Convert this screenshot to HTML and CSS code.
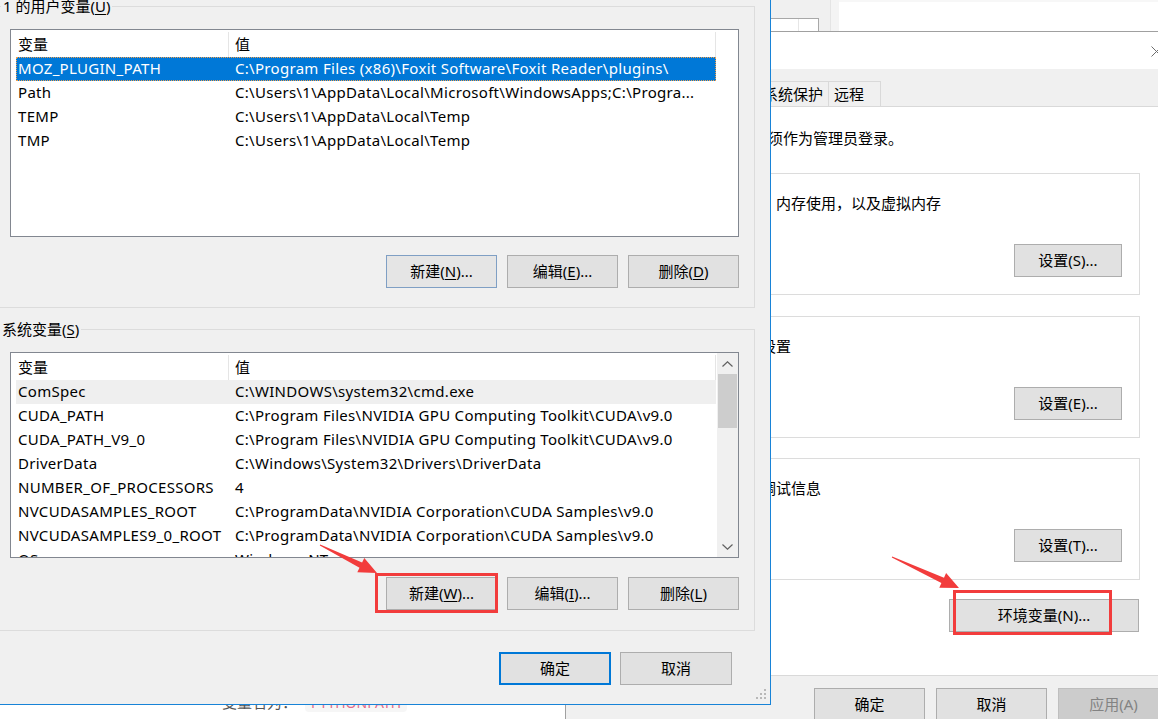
FILE: index.html
```html
<!DOCTYPE html>
<html lang="zh-CN">
<head>
<meta charset="utf-8">
<title>环境变量</title>
<link rel="stylesheet" href="styles.css">
</head>
<body>
<div class="desktop">

  <div class="bgwin">
    <div class="bg-gap"></div>
    <div class="bg-panel"><div class="bg-field"><span class="bg-field-a"></span></div></div>
    <div class="bg-strip"></div>
    <div class="bg-rest"></div>
  </div>

  <div class="webtext">变量名为：<span class="code">PYTHONPATH</span></div>

  <div class="sysprops">
    <div class="sp-title">
      <svg class="sp-close" width="11" height="11" viewBox="0 0 11 11"><path d="M0.5 0.5L10.5 10.5M10.5 0.5L0.5 10.5" stroke="#6d6d6d" stroke-width="1" fill="none"/></svg>
    </div>
    <div class="sp-tabs">
      <div class="tab tab-a">计算机名</div>
      <div class="tab tab-b">硬件</div>
      <div class="tab tab-c">高级</div>
      <div class="tab tab-d">系统保护</div>
      <div class="tab tab-e">远程</div>
    </div>
    <div class="sp-page">
      <p class="sp-note">要进行大多数更改，你必须作为管理员登录。</p>
      <fieldset class="sp-group">
        <legend>性能</legend>
        <p class="sp-text">视觉效果，处理器计划，内存使用，以及虚拟内存</p>
        <div class="sp-btnrow"><button class="btn sp-btn">设置(S)...</button></div>
      </fieldset>
      <fieldset class="sp-group">
        <legend>用户配置文件</legend>
        <p class="sp-text">与登录帐户相关的桌面设置</p>
        <div class="sp-btnrow"><button class="btn sp-btn">设置(E)...</button></div>
      </fieldset>
      <fieldset class="sp-group sp-group-last">
        <legend>启动和故障恢复</legend>
        <p class="sp-text">系统启动、系统故障和调试信息</p>
        <div class="sp-btnrow"><button class="btn sp-btn">设置(T)...</button></div>
      </fieldset>
      <div class="sp-envrow"><button class="btn env-btn">环境变量(N)...</button></div>
    </div>
    <div class="sp-foot">
      <button class="btn foot-btn">确定</button>
      <button class="btn foot-btn">取消</button>
      <button class="btn foot-btn disabled">应用(A)</button>
    </div>
  </div>

  <div class="envdlg">
    <fieldset class="group g-user">
      <legend class="lg-user">1 的用户变量(<u>U</u>)</legend>
      <div class="lv lv-user">
        <div class="lv-body">
          <div class="lv-head"><div class="c1">变量</div><div class="c2">值</div></div>
          <div class="lv-row sel"><div class="c1">MOZ_PLUGIN_PATH</div><div class="c2">C:\Program Files (x86)\Foxit Software\Foxit Reader\plugins\</div></div>
          <div class="lv-row"><div class="c1">Path</div><div class="c2">C:\Users\1\AppData\Local\Microsoft\WindowsApps;C:\Progra...</div></div>
          <div class="lv-row"><div class="c1">TEMP</div><div class="c2">C:\Users\1\AppData\Local\Temp</div></div>
          <div class="lv-row"><div class="c1">TMP</div><div class="c2">C:\Users\1\AppData\Local\Temp</div></div>
        </div>
      </div>
      <div class="btnrow">
        <button class="btn row-btn focus">新建(<u>N</u>)...</button>
        <button class="btn row-btn">编辑(<u>E</u>)...</button>
        <button class="btn row-btn">删除(<u>D</u>)</button>
      </div>
    </fieldset>

    <fieldset class="group g-sys">
      <legend class="lg-sys">系统变量(<u>S</u>)</legend>
      <div class="lv lv-sys">
        <div class="lv-body">
          <div class="lv-head"><div class="c1">变量</div><div class="c2">值</div></div>
          <div class="lv-row hover"><div class="c1">ComSpec</div><div class="c2">C:\WINDOWS\system32\cmd.exe</div></div>
          <div class="lv-row"><div class="c1">CUDA_PATH</div><div class="c2">C:\Program Files\NVIDIA GPU Computing Toolkit\CUDA\v9.0</div></div>
          <div class="lv-row"><div class="c1">CUDA_PATH_V9_0</div><div class="c2">C:\Program Files\NVIDIA GPU Computing Toolkit\CUDA\v9.0</div></div>
          <div class="lv-row"><div class="c1">DriverData</div><div class="c2">C:\Windows\System32\Drivers\DriverData</div></div>
          <div class="lv-row"><div class="c1">NUMBER_OF_PROCESSORS</div><div class="c2">4</div></div>
          <div class="lv-row"><div class="c1">NVCUDASAMPLES_ROOT</div><div class="c2">C:\ProgramData\NVIDIA Corporation\CUDA Samples\v9.0</div></div>
          <div class="lv-row"><div class="c1">NVCUDASAMPLES9_0_ROOT</div><div class="c2">C:\ProgramData\NVIDIA Corporation\CUDA Samples\v9.0</div></div>
          <div class="lv-row"><div class="c1">OS</div><div class="c2">Windows_NT</div></div>
        </div>
        <div class="sb">
          <div class="sb-btn"><svg width="11" height="6" viewBox="0 0 11 6"><path d="M0.5 5.5L5.5 0.8L10.5 5.5" stroke="#606060" stroke-width="1.2" fill="none"/></svg></div>
          <div class="sb-thumb"></div>
          <div class="sb-fill"></div>
          <div class="sb-btn"><svg width="11" height="6" viewBox="0 0 11 6"><path d="M0.5 0.5L5.5 5.2L10.5 0.5" stroke="#606060" stroke-width="1.2" fill="none"/></svg></div>
        </div>
      </div>
      <div class="btnrow btnrow-sys">
        <button class="btn row-btn">新建(<u>W</u>)...</button>
        <button class="btn row-btn">编辑(<u>I</u>)...</button>
        <button class="btn row-btn">删除(<u>L</u>)</button>
      </div>
    </fieldset>

    <div class="dlg-foot">
      <button class="btn dlg-btn ok">确定</button>
      <button class="btn dlg-btn">取消</button>
    </div>

    <svg class="grip" width="11" height="11" viewBox="0 0 11 11">
      <rect x="8" y="0" width="2" height="2" fill="#b8b8b8"/>
      <rect x="4" y="4" width="2" height="2" fill="#b8b8b8"/>
      <rect x="8" y="4" width="2" height="2" fill="#b8b8b8"/>
      <rect x="0" y="8" width="2" height="2" fill="#b8b8b8"/>
      <rect x="4" y="8" width="2" height="2" fill="#b8b8b8"/>
      <rect x="8" y="8" width="2" height="2" fill="#b8b8b8"/>
    </svg>
  </div>

  <svg class="marks" width="1158" height="719" viewBox="0 0 1158 719">
    <rect x="376.5" y="574.5" width="120" height="37" fill="none" stroke="#f23c3c" stroke-width="3"/>
    <rect x="954.5" y="591.5" width="156" height="42" fill="none" stroke="#f23c3c" stroke-width="3"/>
    <polygon fill="#f23c3c" points="320.2,544.6 362.1,562.4 364.3,557.9 377,573 357.3,572.3 359.5,567.8 319.8,545.4"/>
    <polygon fill="#f23c3c" points="892.2,556.6 944,577.7 946.1,573.1 959,588 939.3,587.7 941.4,583.1 891.8,557.4"/>
  </svg>
</div>
</body>
</html>
```

FILE: styles.css
```css
* { box-sizing: border-box; }
html, body { margin: 0; padding: 0; }
body {
  width: 1158px;
  height: 719px;
  overflow: hidden;
  background: #ffffff;
  font-family: "Noto Sans", "Noto Sans CJK SC", sans-serif;
  font-size: 15px;
  color: #000;
}
.desktop { position: relative; width: 1158px; height: 719px; overflow: hidden; background: #fff; }

button { font: inherit; color: #000; }
u { text-decoration: underline; text-underline-offset: 2px; text-decoration-thickness: 1px; }

/* ---------- window behind, at top ---------- */
.bgwin {
  position: absolute; left: 0; top: 0;
  width: 1158px; height: 31px;
  display: flex; background: #fff;
}
.bg-gap { width: 771px; flex: none; }
.bg-panel { width: 59px; flex: none; background: #f0f0f0; }
.bg-field {
  margin-top: 18px; width: 48px; height: 13px;
  background: #fff; border-top: 1px solid #a8a8a8; border-right: 1px solid #a8a8a8;
  display: flex;
}
.bg-field-a { width: 28px; border-right: 1px solid #e6e6e6; }
.bg-strip { width: 9px; flex: none; background: #f4f4f4; border-left: 1px solid #e4e4e4; }
.bg-rest { flex: 1; border-top: 2px solid #f7f7f7; }

/* ---------- faint page text below dialog ---------- */
.webtext {
  position: absolute; left: 222px; top: 692px;
  line-height: 20px; font-size: 15px; color: #555;
}
.webtext .code {
  margin-left: 8px; padding: 0 6px; border-radius: 4px;
  background: #f6f6f6; color: #e36a8a; font-size: 14px;
}

/* ---------- System properties dialog ---------- */
.sysprops {
  position: absolute; left: 565px; top: 31px;
  width: 640px; height: 720px;
  border-left: 1px solid #a0a0a0; border-top: 1px solid #a0a0a0;
  background: #f0f0f0;
}
.sp-title {
  height: 37px; background: #fff;
  display: flex; align-items: center;
  padding-left: 585px;
}
.sp-close { display: block; margin-top: 2px; }
.sp-tabs {
  height: 38px; padding: 12px 0 0 6px;
  border-bottom: 1px solid #d9d9d9;
  display: flex; background: #f0f0f0;
}
.tab {
  height: 25px; line-height: 24px;
  border-top: 1px solid #d9d9d9; border-left: 1px solid #d9d9d9;
  padding-left: 5px; white-space: nowrap; background: #f0f0f0;
}
.tab-a { width: 75px; }
.tab-b { width: 50px; }
.tab-c { width: 60px; background: #fff; }
.tab-d { width: 71px; }
.tab-e { width: 53px; border-right: 1px solid #d9d9d9; }

.sp-page {
  height: 569px; background: #fff;
  border-bottom: 1px solid #d9d9d9;
  padding: 21px 0 0 37px;
}
.sp-note { margin: 0; line-height: 20px; white-space: nowrap; }
.sp-group {
  margin: 17px 0 0 -8px; width: 545px; min-width: 0;
  border: 1px solid #dcdcdc;
  padding: 0 17px 17px 15px;
}
.sp-group + .sp-group { margin-top: 13px; }
.sp-group.sp-group-last { margin-top: 12px; }
.sp-group legend {
  line-height: 16px; padding: 0 2px; margin-left: 6px; font-size: 15px;
}
.sp-text { margin: 12px 0 0 0; line-height: 20px; white-space: nowrap; }
.sp-btnrow { margin-top: 31px; display: flex; justify-content: flex-end; }

.btn {
  height: 33px; padding: 0;
  background: #e1e1e1; border: 1px solid #adadad;
  line-height: 31px; white-space: nowrap; text-align: center;
}
.sp-btn { width: 108px; }
.sp-envrow {
  margin: 19px 0 0 -8px; width: 545px; padding-right: 1px;
  display: flex; justify-content: flex-end;
}
.env-btn { width: 190px; }
.sp-foot { padding: 12px 0 0 248px; display: flex; gap: 11px; }
.foot-btn { width: 111px; }
.foot-btn.disabled { background: #cccccc; border-color: #bfbfbf; color: #838383; }

/* ---------- Environment variables dialog ---------- */
.envdlg {
  position: absolute; left: 0; top: 0;
  width: 771px; height: 705px;
  background: #f0f0f0;
  border-right: 1px solid #1883d7; border-bottom: 1px solid #1883d7;
}
.group {
  margin: 0 0 0 -5px; width: 760px; min-width: 0;
  border: 1px solid #dcdcdc;
  padding: 0 0 19px 0;
}
.g-user { margin-top: -2px; }
.g-sys { margin-top: 13px; padding-bottom: 20px; }
.group legend { line-height: 16px; padding: 0 2px; font-size: 15px; }
.lg-user { margin-left: 5px; }
.lg-sys { margin-left: 4px; }

.lv {
  margin: 15px 0 0 14px; width: 729px;
  border: 1px solid #828790; background: #fff;
  display: flex; overflow: hidden;
}
.lv-user { height: 208px; }
.lv-sys { height: 206px; }
.lv-body { flex: 1; min-width: 0; padding-left: 5px; overflow: hidden; }
.lv-head { display: flex; height: 27px; padding-top: 2px; line-height: 25px; }
.lv-head .c1, .lv-head .c2 { border-right: 1px solid #e5e5e5; }
.lv-row { display: flex; width: 700px; height: 24px; line-height: 23px; letter-spacing: 0.3px; }
.c1 { width: 213px; flex: none; padding-left: 2px; white-space: nowrap; overflow: hidden; }
.c2 { width: 487px; flex: none; padding-left: 6px; white-space: nowrap; overflow: hidden; }
.lv-row.sel { background: #0078d7; color: #fff; outline: 1px dotted #f2a04c; outline-offset: -1px; }
.lv-row.hover { background: #efefef; }

.sb { width: 21px; flex: none; background: #f0f0f0; display: flex; flex-direction: column; }
.sb-btn { height: 21px; display: flex; align-items: center; justify-content: center; }
.sb-btn svg { display: block; }
.sb-thumb { height: 54px; margin: 0 1px; background: #cdcdcd; }
.sb-fill { flex: 1; }

.btnrow { margin-top: 18px; padding-right: 15px; display: flex; justify-content: flex-end; gap: 10px; }
.btnrow-sys { margin-top: 19px; }
.row-btn { width: 111px; }
.row-btn.focus { border-color: #7f9fc4; background: #e5e5e5; }

.dlg-foot { margin-top: 21px; padding-right: 38px; display: flex; justify-content: flex-end; gap: 9px; }
.dlg-btn { width: 112px; }
.dlg-btn.ok { border: 2px solid #0078d7; line-height: 29px; }

.grip { position: absolute; right: 3px; bottom: 4px; }

/* ---------- annotation overlay ---------- */
.marks { position: absolute; left: 0; top: 0; pointer-events: none; }
```
